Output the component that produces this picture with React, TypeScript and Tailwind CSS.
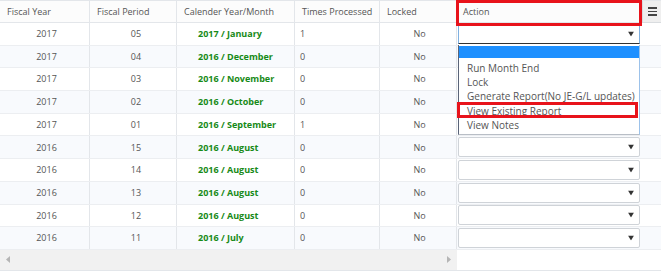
import React from 'react';

const rows = [
  { fy: '2017', fp: '05', cal: '2017 / January', times: '1' },
  { fy: '2017', fp: '04', cal: '2016 / December', times: '0' },
  { fy: '2017', fp: '03', cal: '2016 / November', times: '0' },
  { fy: '2017', fp: '02', cal: '2016 / October', times: '0' },
  { fy: '2017', fp: '01', cal: '2016 / September', times: '1' },
  { fy: '2016', fp: '15', cal: '2016 / August', times: '0' },
  { fy: '2016', fp: '14', cal: '2016 / August', times: '0' },
  { fy: '2016', fp: '13', cal: '2016 / August', times: '0' },
  { fy: '2016', fp: '12', cal: '2016 / August', times: '0' },
  { fy: '2016', fp: '11', cal: '2016 / July', times: '0' },
];

const options = ['Run Month End', 'Lock', 'Generate Report(No JE-G/L updates)', 'View Existing Report', 'View Notes'];

const Caret = () => (
  <svg width="6" height="5" viewBox="0 0 6 5" className="absolute right-[5px] top-1/2 -translate-y-1/2">
    <path d="M0 0 L6 0 L3 5 Z" fill="#333" />
  </svg>
);

const headCell = 'h-full flex items-center px-[7px] border-r border-[#e3e6ea] text-[#555] whitespace-nowrap overflow-hidden';
const cell = 'h-full flex items-center border-r border-[#e3e6ea] whitespace-nowrap';

export default function App() {
  return (
    <div
      className="relative w-[661px] h-[273px] bg-white text-[9px]"
      style={{ fontFamily: '"Open Sans", "DejaVu Sans", sans-serif' }}
    >
      <div className="flex h-[271px] border-t border-b border-[#e3e6ea]">
        {/* scrollable columns */}
        <div className="w-[457px] flex flex-col">
          <div className="flex h-[22px] border-b border-[#e3e6ea] bg-[#fcfcfc]">
            <div className={`${headCell} w-[90px]`}>Fiscal Year</div>
            <div className={`${headCell} w-[87px]`}>Fiscal Period</div>
            <div className={`${headCell} w-[118px]`}>Calender Year/Month</div>
            <div className={`${headCell} w-[85px] px-[5px]`}>Times Processed</div>
            <div className={`${headCell} w-[77px]`}>Locked</div>
          </div>
          {rows.map((r, i) => (
            <div
              key={i}
              className={`flex h-[22.7px] border-b border-[#eceef1] ${i % 2 === 1 ? 'bg-[#f8fafd]' : 'bg-white'}`}
            >
              <div className={`${cell} w-[90px] justify-center pl-[4px] text-[#555]`}>{r.fy}</div>
              <div className={`${cell} w-[87px] justify-center pl-[6px] text-[#555]`}>{r.fp}</div>
              <div className={`${cell} w-[118px] pl-[21px] font-bold text-[#178a17]`}>{r.cal}</div>
              <div className={`${cell} w-[85px] pl-[5px] text-[#555]`}>{r.times}</div>
              <div className={`${cell} w-[77px] justify-center pl-[3px] text-[#555]`}>No</div>
            </div>
          ))}
          <div className="flex-1 bg-[#f1f1f1] flex items-center justify-between px-[6px]">
            <svg width="4" height="7" viewBox="0 0 4 7">
              <path d="M4 0 L0 3.5 L4 7 Z" fill="#b5b5b5" />
            </svg>
            <svg width="4" height="7" viewBox="0 0 4 7">
              <path d="M0 0 L4 3.5 L0 7 Z" fill="#b5b5b5" />
            </svg>
          </div>
        </div>

        {/* pinned action column */}
        <div className="w-[185px] flex flex-col">
          <div className="h-[22px] flex items-center px-[6px] border-b border-[#e3e6ea] bg-[#fcfcfc] text-[#555]">
            Action
          </div>
          {rows.map((_, i) => (
            <div
              key={i}
              className={`h-[22.7px] flex items-center pl-[1px] pr-[2px] border-b border-[#eceef1] ${i % 2 === 1 ? 'bg-[#f8fafd]' : 'bg-white'}`}
            >
              <div
                className={`relative w-full h-[20px] bg-white rounded-[2px] border ${
                  i === 0 ? 'border-[#7fb0e0] border-b-[#333] rounded-b-none' : 'border-[#cfd3d8]'
                }`}
              >
                <Caret />
              </div>
            </div>
          ))}
        </div>

        {/* gutter */}
        <div className="flex-1 flex flex-col">
          <div className="h-[22px] flex items-center justify-center bg-[#efefef] border-l border-b border-[#d9dcdf]">
            <div className="flex flex-col gap-[2px]">
              <div className="w-[9px] h-[1.5px] bg-[#444]" />
              <div className="w-[9px] h-[1.5px] bg-[#444]" />
              <div className="w-[9px] h-[1.5px] bg-[#444]" />
            </div>
          </div>
          {rows.map((_, i) => (
            <div
              key={i}
              className={`h-[22.7px] border-b border-[#eceef1] ${i % 2 === 1 ? 'bg-[#f8fafd]' : 'bg-white'}`}
            />
          ))}
        </div>
      </div>

      {/* open select popup */}
      <div className="absolute left-[458px] top-[45px] w-[182px] h-[90px] bg-white border-l border-l-[#5a6478] border-r border-r-[#9cc2ea] border-b border-b-[#b8bec6] text-[10px] text-[#555]">
        <div className="h-[12px] mt-[1px] bg-[#1e90ff]" />
        <div className="pt-[3px]">
          {options.map((o) => (
            <div key={o} className="h-[14.3px] flex items-center pl-[8px] whitespace-nowrap">
              {o}
            </div>
          ))}
        </div>
      </div>

      {/* highlight boxes */}
      <div className="absolute left-[456px] top-0 w-[186px] h-[26px] border-[3px] border-[#e8131b]" />
      <div className="absolute left-[457px] top-[102px] w-[181px] h-[16px] border-[3px] border-[#e8131b]" />
    </div>
  );
}
